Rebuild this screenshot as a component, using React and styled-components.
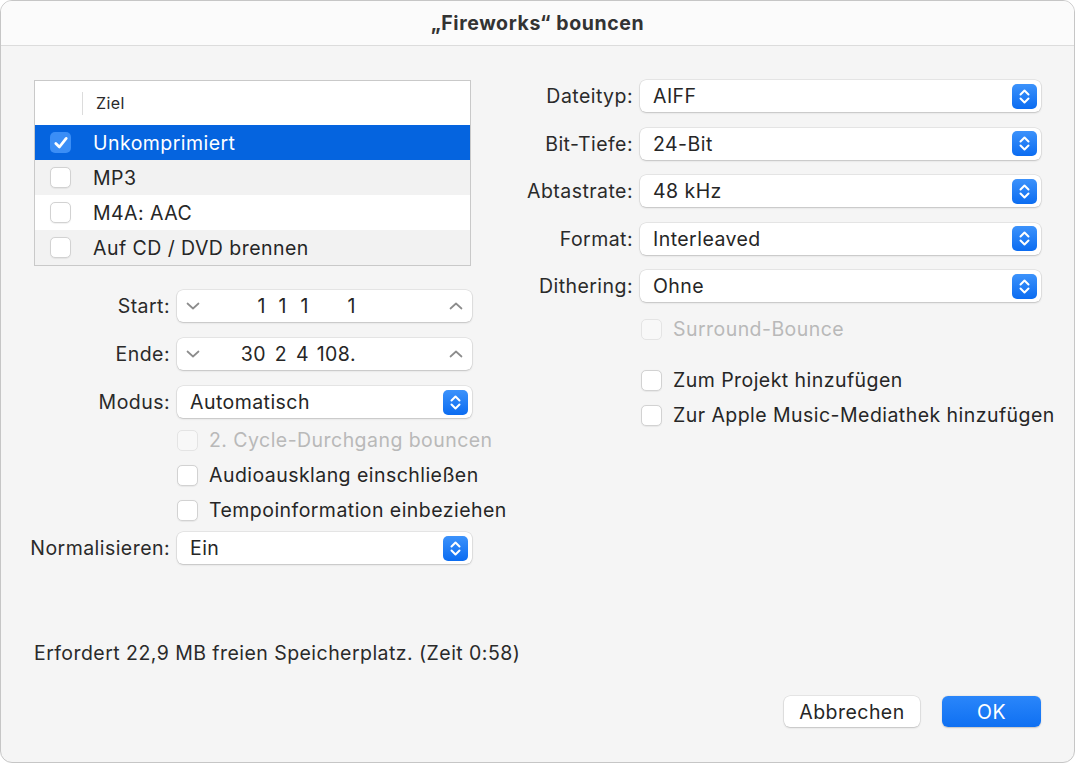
import React from 'react';
import styled, { createGlobalStyle, css } from 'styled-components';

const GlobalStyle = createGlobalStyle`
  html, body {
    margin: 0;
    padding: 0;
    background: #ffffff;
  }
  * {
    box-sizing: border-box;
  }
  body {
    font-family: Inter, "Noto Sans", "Liberation Sans", sans-serif;
    color: #262626;
    letter-spacing: 0.45px;
  }
`;

// Window frame
const Window = styled.div`
  width: 1075px;
  height: 763px;
  display: flex;
  flex-direction: column;
  background: #f5f5f5;
  border: 1px solid #c6c6c6;
  border-radius: 12px;
  overflow: hidden;
`;

const TitleBar = styled.header`
  height: 45px;
  flex-shrink: 0;
  display: flex;
  align-items: center;
  justify-content: center;
  background: #fbfbfb;
  border-bottom: 1px solid #dcdcdc;
  font-size: 19.5px;
  font-weight: 700;
  color: #333;
  letter-spacing: 0.6px;
`;

const Body = styled.main`
  flex: 1;
  display: flex;
  flex-direction: column;
  padding: 34px 33px 35px 29px;
`;

const Columns = styled.div`
  display: flex;
  gap: 48px;
`;

const LeftColumn = styled.section`
  width: 442px;
  display: flex;
  flex-direction: column;
`;

const RightColumn = styled.section`
  width: 521px;
  display: flex;
  flex-direction: column;
`;

// Destination table
const Table = styled.div`
  margin-left: 4px;
  width: 437px;
  height: 186px;
  border: 1px solid #c9c9c9;
  background: #f2f2f2;
  display: flex;
  flex-direction: column;
`;

const TableHeader = styled.div`
  height: 44px;
  flex-shrink: 0;
  background: #ffffff;
  display: flex;
  align-items: center;
  font-size: 16px;
  color: #2a2a2a;

  &::before {
    content: '';
    width: 1px;
    height: 23px;
    background: #dcdcdc;
    margin: 0 13px 0 47px;
  }
`;

const TableRow = styled.div`
  height: 35px;
  flex-shrink: 0;
  display: flex;
  align-items: center;
  gap: 22px;
  padding-left: 15px;
  font-size: 19.5px;
  background: ${({ $selected, $odd }) => ($selected ? '#0564df' : $odd ? '#f2f2f2' : '#ffffff')};
  color: ${({ $selected }) => ($selected ? '#ffffff' : '#262626')};
`;

// Checkbox
const Box = styled.span`
  width: 21px;
  height: 21px;
  flex-shrink: 0;
  border-radius: 5px;
  display: inline-flex;
  align-items: center;
  justify-content: center;
  ${({ $checked }) =>
    $checked
      ? css`
          background: #3b8ef6;
        `
      : css`
          background: #ffffff;
          border: 1px solid #d2d2d2;
          box-shadow: 0 0.5px 1px rgba(0, 0, 0, 0.06);
        `}
  ${({ $disabled }) =>
    $disabled &&
    css`
      background: #f8f8f8;
      border-color: #e4e4e4;
      box-shadow: none;
    `}
`;

const Checkbox = ({ checked, disabled }) => (
  <Box $checked={checked} $disabled={disabled}>
    {checked && (
      <svg width="16" height="16" viewBox="0 0 16 16">
        <path d="M2.8 8.4 L6.4 12 L13.2 3.4" fill="none" stroke="#fff" strokeWidth="2.8" strokeLinecap="round" strokeLinejoin="round" />
      </svg>
    )}
  </Box>
);

const CheckRow = styled.label`
  height: 24px;
  display: flex;
  align-items: center;
  gap: 11px;
  font-size: 19.5px;
  white-space: nowrap;
  margin-top: ${({ $gap }) => $gap}px;
  margin-left: ${({ $indent }) => $indent || 0}px;
  color: ${({ $disabled }) => ($disabled ? '#b9b9b9' : '#262626')};
`;

// Form grid rows
const FieldRow = styled.div`
  display: grid;
  grid-template-columns: ${({ $label }) => $label}px 1fr;
  column-gap: 7px;
  align-items: center;
  margin-top: ${({ $gap }) => $gap}px;
`;

const Label = styled.span`
  text-align: right;
  font-size: 19.5px;
  color: #2a2a2a;
  white-space: nowrap;
`;

const Control = styled.div`
  height: 32px;
  background: #ffffff;
  border-radius: 6px;
  box-shadow: 0 0 0 0.5px rgba(0, 0, 0, 0.12), 0 1px 2px rgba(0, 0, 0, 0.16);
  display: flex;
  align-items: center;
  font-size: 19.5px;
  color: #262626;
`;

const SelectValue = styled.span`
  flex: 1;
  padding-left: 13px;
`;

const PopupButton = styled.span`
  width: 25px;
  height: 25px;
  margin-right: 4px;
  border-radius: 5px;
  background: linear-gradient(#3c92fb, #0b6cf1);
  display: inline-flex;
  align-items: center;
  justify-content: center;
`;

const Select = ({ value }) => (
  <Control>
    <SelectValue>{value}</SelectValue>
    <PopupButton>
      <svg width="25" height="25" viewBox="0 0 25 25">
        <path d="M8.5 10.5 L12.5 6.5 L16.5 10.5 M8.5 14.5 L12.5 18.5 L16.5 14.5" fill="none" stroke="#fff" strokeWidth="2" strokeLinecap="round" strokeLinejoin="round" />
      </svg>
    </PopupButton>
  </Control>
);

const StepArrow = styled.span`
  width: 32px;
  display: inline-flex;
  justify-content: center;
`;

const Segment = styled.span`
  width: ${({ $w }) => $w}px;
  text-align: right;
  white-space: nowrap;
`;

const Segments = styled.span`
  flex: 1;
  display: flex;
`;

const Stepper = ({ bar, beat, div, tick }) => (
  <Control>
    <StepArrow>
      <svg width="14" height="8" viewBox="0 0 14 8">
        <path d="M1.5 1.5 L7 6.5 L12.5 1.5" fill="none" stroke="#8c8c8c" strokeWidth="1.7" strokeLinecap="round" strokeLinejoin="round" />
      </svg>
    </StepArrow>
    <Segments>
      <Segment $w={57}>{bar}</Segment>
      <Segment $w={21}>{beat}</Segment>
      <Segment $w={22}>{div}</Segment>
      <Segment $w={47}>{tick}</Segment>
    </Segments>
    <StepArrow>
      <svg width="14" height="8" viewBox="0 0 14 8">
        <path d="M1.5 6.5 L7 1.5 L12.5 6.5" fill="none" stroke="#8c8c8c" strokeWidth="1.7" strokeLinecap="round" strokeLinejoin="round" />
      </svg>
    </StepArrow>
  </Control>
);

// Footer
const Requirement = styled.p`
  margin: auto 0 0 4px;
  font-size: 19.5px;
  color: #2a2a2a;
`;

const ButtonRow = styled.div`
  display: flex;
  justify-content: flex-end;
  gap: 22px;
  margin-top: 31px;
`;

const Button = styled.button`
  height: 31px;
  width: ${({ $w }) => $w}px;
  border: none;
  border-radius: 6px;
  font-family: inherit;
  font-size: 19.5px;
  letter-spacing: 0.45px;
  ${({ $primary }) =>
    $primary
      ? css`
          background: linear-gradient(#2a86fa, #0f70f2);
          color: #ffffff;
          box-shadow: 0 0.5px 1.5px rgba(0, 0, 0, 0.2);
        `
      : css`
          background: #ffffff;
          color: #262626;
          box-shadow: 0 0 0 0.5px rgba(0, 0, 0, 0.12), 0 1px 2px rgba(0, 0, 0, 0.16);
        `}
`;

const destinations = [
  { name: 'Unkomprimiert', checked: true },
  { name: 'MP3' },
  { name: 'M4A: AAC' },
  { name: 'Auf CD / DVD brennen' },
];

const fileSettings = [
  ['Dateityp:', 'AIFF'],
  ['Bit-Tiefe:', '24-Bit'],
  ['Abtastrate:', '48 kHz'],
  ['Format:', 'Interleaved'],
  ['Dithering:', 'Ohne'],
];

const App = () => (
  <>
    <GlobalStyle />
    <Window>
      <TitleBar>„Fireworks“ bouncen</TitleBar>
      <Body>
        <Columns>
          <LeftColumn>
            <Table>
              <TableHeader>Ziel</TableHeader>
              {destinations.map((d, i) => (
                <TableRow key={d.name} $selected={d.checked} $odd={i % 2 === 1}>
                  <Checkbox checked={d.checked} />
                  {d.name}
                </TableRow>
              ))}
            </Table>

            <FieldRow $label={140} $gap={24}>
              <Label>Start:</Label>
              <Stepper bar="1" beat="1" div="1" tick="1" />
            </FieldRow>
            <FieldRow $label={140} $gap={16}>
              <Label>Ende:</Label>
              <Stepper bar="30" beat="2" div="4" tick="108." />
            </FieldRow>
            <FieldRow $label={140} $gap={16}>
              <Label>Modus:</Label>
              <Select value="Automatisch" />
            </FieldRow>

            <CheckRow $gap={10} $indent={147} $disabled>
              <Checkbox disabled />
              2. Cycle-Durchgang bouncen
            </CheckRow>
            <CheckRow $gap={11} $indent={147}>
              <Checkbox />
              Audioausklang einschließen
            </CheckRow>
            <CheckRow $gap={11} $indent={147}>
              <Checkbox />
              Tempoinformation einbeziehen
            </CheckRow>

            <FieldRow $label={140} $gap={10}>
              <Label>Normalisieren:</Label>
              <Select value="Ein" />
            </FieldRow>
          </LeftColumn>

          <RightColumn>
            {fileSettings.map(([label, value], i) => (
              <FieldRow key={label} $label={113} $gap={i === 0 ? 0 : 15.5}>
                <Label>{label}</Label>
                <Select value={value} />
              </FieldRow>
            ))}
            <CheckRow $gap={15} $indent={121} $disabled>
              <Checkbox disabled />
              Surround-Bounce
            </CheckRow>
            <CheckRow $gap={27} $indent={121}>
              <Checkbox />
              Zum Projekt hinzufügen
            </CheckRow>
            <CheckRow $gap={11} $indent={121}>
              <Checkbox />
              Zur Apple Music-Mediathek hinzufügen
            </CheckRow>
          </RightColumn>
        </Columns>

        <Requirement>Erfordert 22,9 MB freien Speicherplatz. (Zeit 0:58)</Requirement>
        <ButtonRow>
          <Button $w={136}>Abbrechen</Button>
          <Button $w={99} $primary>OK</Button>
        </ButtonRow>
      </Body>
    </Window>
  </>
);

export default App;
